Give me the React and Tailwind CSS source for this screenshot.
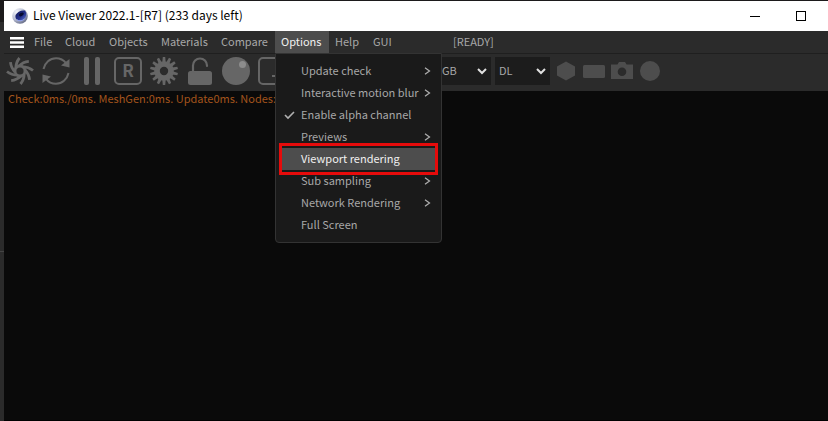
import React, { useState } from "react";

const menus = [
  { label: "File", width: "w-[31px]" },
  { label: "Cloud", width: "w-[44px]" },
  { label: "Objects", width: "w-[52px]" },
  { label: "Materials", width: "w-[60px]" },
  { label: "Compare", width: "w-[60px]" },
  { label: "Options", width: "w-[54px]" },
  { label: "Help", width: "w-[38px]" },
  { label: "GUI", width: "w-[32px]" },
];

const optionItems = [
  { label: "Update check", submenu: true },
  { label: "Interactive motion blur", submenu: true },
  { label: "Enable alpha channel", checked: true },
  { label: "Previews", submenu: true },
  { label: "Viewport rendering", active: true },
  { label: "Sub sampling", submenu: true },
  { label: "Network Rendering", submenu: true },
  { label: "Full Screen" },
];

const blades = [0, 1, 2, 3, 4, 5, 6, 7].map((n) => n * 45);
const teeth = Array.from({ length: 14 }, (_, n) => (n * 360) / 14);

const Icon = ({ children, size = 28 }) => (
  <svg width={size} height={size} viewBox={`0 0 ${size} ${size}`} fill="none" aria-hidden="true">
    {children}
  </svg>
);

const AppLogo = () => (
  <Icon size={16}>
    <defs>
      <radialGradient id="rim" cx="0.3" cy="0.25" r="0.9">
        <stop offset="0" stopColor="#f4f6fb" />
        <stop offset="0.55" stopColor="#b4bad0" />
        <stop offset="1" stopColor="#4d5470" />
      </radialGradient>
      <linearGradient id="ball" x1="0" y1="0" x2="1" y2="1">
        <stop offset="0" stopColor="#0c1352" />
        <stop offset="0.6" stopColor="#26348f" />
        <stop offset="1" stopColor="#6f83dc" />
      </linearGradient>
    </defs>
    <circle cx="8" cy="8" r="7.8" fill="url(#rim)" />
    <path d="M3.600 7C5.400 4 9 1.800 13 2.600c1.600 2 1.600 5.200.2 7.400-1.800 2.600-5.600 3.200-8 1.800C3.600 10.800 3 8.800 3.600 7z" fill="url(#ball)" />
    <ellipse cx="9.400" cy="6.400" rx="2.600" ry="1.600" transform="rotate(-30 9.400 6.400)" fill="#070b30" />
    <path d="M5 11.800c2.400 1.600 5.600 1.200 7.600-1" stroke="#8fa0ee" strokeWidth="1" />
  </Icon>
);

const tools = [
  {
    name: "Send scene",
    icon: (
      <g stroke="#666">
        <circle cx="14" cy="14" r="5" strokeWidth="2.800" />
        {blades.map((a) => (
          <path key={a} d="M9.800 11.500Q9.800 5.500 13.500 1" strokeWidth="2.800" transform={`rotate(${a} 14 14)`} />
        ))}
      </g>
    ),
  },
  {
    name: "Restart",
    icon: (
      <g>
        <path d="M1.500 12C2.800 5.500 8 1.200 14 1.200c4.200 0 7.800 2 10 5M26.500 16c-1.300 6.500-6.500 10.800-12.500 10.800-4.200 0-7.800-2-10-5" stroke="#666" strokeWidth="2" />
        <path d="M27.500 2v8.500l-8.500-2zM.5 26v-8.500l8.500 2z" fill="#666" />
      </g>
    ),
  },
  {
    name: "Pause",
    icon: (
      <g fill="#666">
        <rect x="6" y="0" width="5" height="28" rx="2" />
        <rect x="17" y="0" width="5" height="28" rx="2" />
      </g>
    ),
  },
  {
    name: "Region",
    icon: (
      <g>
        <rect x="1" y="1" width="26" height="26" rx="4" stroke="#666" strokeWidth="2" />
        <text x="14" y="20" textAnchor="middle" fontSize="17" fontWeight="700" fill="#666">R</text>
      </g>
    ),
  },
  {
    name: "Settings",
    icon: (
      <g>
        <circle cx="14" cy="14" r="7" stroke="#666" strokeWidth="5.600" />
        {teeth.map((a) => (
          <path key={a} d="M12.300 5.500L12.800 0h2.400l.5 5.500z" fill="#666" transform={`rotate(${a} 14 14)`} />
        ))}
      </g>
    ),
  },
  {
    name: "Lock resolution",
    icon: (
      <g>
        <rect x="2" y="14" width="24" height="14" rx="2.500" fill="#666" />
        <path d="M7 15V8.500a7 7 0 0 1 14 0V9" stroke="#666" strokeWidth="2.200" strokeLinecap="round" />
      </g>
    ),
  },
  {
    name: "Material ball",
    icon: (
      <g>
        <circle cx="14" cy="14" r="14" fill="#666" />
        <circle cx="20.500" cy="7.500" r="3.500" fill="#8c8c8c" />
      </g>
    ),
  },
  {
    name: "Render region",
    icon: (
      <g stroke="#666" strokeWidth="2">
        <rect x="1" y="1" width="26" height="26" rx="4" />
        <path d="M14 19h8" />
      </g>
    ),
  },
];

const modes = [
  { name: "Object", icon: <path d="M14 4.500l9 5v9l-9 5-9-5v-9z" fill="#4d4d4d" /> },
  { name: "Plane", icon: <rect x="3" y="8" width="22" height="13" rx="1.500" fill="#4d4d4d" /> },
  {
    name: "Camera",
    icon: (
      <path
        fillRule="evenodd"
        d="M3 7.500h6.500l1.500-2.500h6l1.500 2.500H25V22H3zM14 10.500a4.300 4.300 0 1 0 0 8.600 4.300 4.300 0 0 0 0-8.600z"
        fill="#4d4d4d"
      />
    ),
  },
  { name: "Sphere", icon: <circle cx="14" cy="14" r="10" fill="#4d4d4d" /> },
];

const Select = ({ label, value, options, onChange, className }) => (
  <div className={`relative h-7 ${className}`}>
    <select
      aria-label={label}
      value={value}
      onChange={(e) => onChange(e.target.value)}
      className="h-full w-full appearance-none bg-[#1c1c1c] pb-0.5 pl-1 text-[11px] text-[#a8a8a8] outline-none"
    >
      {options.map((o) => (
        <option key={o}>{o}</option>
      ))}
    </select>
    <svg className="pointer-events-none absolute top-2.5 right-1 h-2 w-2.5" viewBox="0 0 10 8" fill="none">
      <path d="M1 2l4 4 4-4" stroke="#e0e0e0" strokeWidth="2" />
    </svg>
  </div>
);

const OptionsMenu = () => (
  <div className="absolute top-[22px] left-0 z-10 w-[167px] rounded-b-sm border border-[#333] bg-[#1a1a1a] pt-1.5 pb-1.5" role="menu">
    {optionItems.map((item) => (
      <div key={item.label} className="relative px-1.5">
        <button
          role="menuitem"
          className={`flex h-[22px] w-full items-center text-left ${item.active ? "bg-[#4d4d4d] text-[#f0f0f0]" : "text-[#a8a8a8]"}`}
        >
          <span className="flex w-[19px] shrink-0 pl-[2px]">
            {item.checked && (
              <svg width="11" height="10" viewBox="0 0 11 10" fill="none">
                <path d="M1 5l3 3 6-6" stroke="#b0b0b0" strokeWidth="1.600" />
              </svg>
            )}
          </span>
          <span className="grow pb-0.5 whitespace-nowrap">{item.label}</span>
          {item.submenu && (
            <svg className="mr-1 shrink-0" width="8" height="8" viewBox="0 0 8 8" fill="none">
              <path d="M2 .8L6.500 4 2 7.200" stroke="#b0b0b0" strokeWidth="1.200" />
            </svg>
          )}
        </button>
        {item.active && <div className="pointer-events-none absolute -inset-y-[5px] inset-x-[3px] border-3 border-[#e60b0b]" />}
      </div>
    ))}
  </div>
);

const App = () => {
  const [colorSpace, setColorSpace] = useState("HDR/sRGB");
  const [kernel, setKernel] = useState("DL");

  return (
    <div className="flex min-h-screen bg-[#1c1a1b] pt-px font-['Noto_Sans_CJK_KR',sans-serif] text-[11px] leading-[14px]">
      {/* edge of the host window */}
      <div className="flex w-1 shrink-0 flex-col">
        <div className="h-[21px] bg-[#1c1a1b]" />
        <div className="h-[230px] border-b border-[#444] bg-[#2b2b2b]" />
        <div className="grow bg-[#2b2b2b]" />
      </div>

      <div className="flex min-w-0 grow flex-col">
        <header className="flex h-[30px] items-center bg-white pr-1 pl-2 text-black">
          <AppLogo />
          <h1 className="ml-[5px] grow pb-0.5 text-[12px] whitespace-nowrap">Live Viewer 2022.1-[R7] (233 days left)</h1>
          <button aria-label="Minimize" className="flex h-full w-[46px] items-center justify-center">
            <span className="h-px w-2.5 bg-black" />
          </button>
          <button aria-label="Maximize" className="flex h-full w-[46px] items-center justify-center">
            <span className="h-2.5 w-2.5 border border-black" />
          </button>
        </header>

        <nav className="flex h-[22px] items-center bg-[#2b2b2b] pl-1.5 text-[#a8a8a8]">
          <button aria-label="Menu" className="mr-1">
            <svg width="14" height="11" viewBox="0 0 14 11">
              <path d="M0 0h14v2.500H0zM0 4.200h14v2.500H0zM0 8.500h14V11H0z" fill="#fff" />
            </svg>
          </button>
          {menus.map((m) => (
            <div key={m.label} className={`relative h-full ${m.width}`}>
              <button
                className={`h-full w-full pb-0.5 pl-1.5 text-left whitespace-nowrap ${m.label === "Options" ? "bg-[#4d4d4d] text-[#f0f0f0]" : ""}`}
              >
                {m.label}
              </button>
              {m.label === "Options" && <OptionsMenu />}
            </div>
          ))}
          <span className="ml-[54px] pb-0.5">[READY]</span>
        </nav>

        <div className="flex h-[38px] items-start border-t border-[#1f1f1f] bg-[#2b2b2b] pt-[3px] pl-0.5">
          <div className="flex gap-2 pr-[113px]">
            {tools.map((t) => (
              <button key={t.name} aria-label={t.name}>
                <Icon>{t.icon}</Icon>
              </button>
            ))}
          </div>
          <Select
            label="Color space"
            value={colorSpace}
            options={["HDR/sRGB", "Linear"]}
            onChange={setColorSpace}
            className="mr-1 w-[92px]"
          />
          <Select label="Kernel" value={kernel} options={["DL", "PT", "PMC"]} onChange={setKernel} className="mr-0.5 w-[55px]" />
          {modes.map((m) => (
            <button key={m.name} aria-label={m.name}>
              <Icon>{m.icon}</Icon>
            </button>
          ))}
        </div>

        <main className="grow border-b border-black bg-[#0a0a0a] pl-1 text-[#a3541c]">
          <p className="whitespace-nowrap">Check:0ms./0ms. MeshGen:0ms. Update0ms. Nodes:0</p>
        </main>
      </div>
    </div>
  );
};

export default App;
